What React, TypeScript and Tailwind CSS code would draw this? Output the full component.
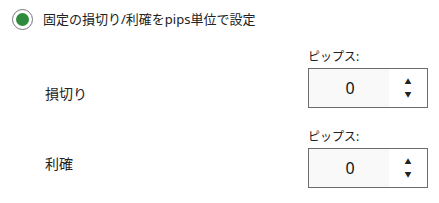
import React from 'react';

const font = { fontFamily: '"Noto Sans", "Noto Sans CJK JP", sans-serif' };

const PipsInput: React.FC<{ value: number }> = ({ value }) => (
  <div className="flex flex-col">
    <span className="text-[12px] leading-[16px] text-[#222]">ピップス:</span>
    <div className="mt-[3px] flex h-[40px] w-[120px] border border-[#6b6b6b] bg-[#f9f9f9]">
      <div className="flex flex-1 items-center justify-center pl-[2px] text-[16px] text-[#111]">{value}</div>
      <div className="flex w-[38px] flex-col items-center justify-center gap-[6px] bg-white text-[7px] leading-[7px] text-[#222]">
        <span>▲</span>
        <span>▼</span>
      </div>
    </div>
  </div>
);

export default function App() {
  const rows = [
    { label: '損切り', pad: 'pt-[35px]' },
    { label: '利確', pad: 'pt-[25px]' },
  ];
  return (
    <div className="h-[203px] w-[439px] bg-white text-[#222]" style={font}>
      <div className="flex items-center pl-[12px] pt-[9px]">
        <div className="flex h-[21px] w-[21px] items-center justify-center rounded-full border border-[#777] bg-white">
          <div className="h-[13px] w-[13px] rounded-full bg-[#2e8b3e]" />
        </div>
        <span className="ml-[10px] text-[13px] leading-[21px]">固定の損切り/利確をpips単位で設定</span>
      </div>
      <div className="mt-[19px] flex flex-col gap-[21px]">
        {rows.map((r) => (
          <div key={r.label} className="flex">
            <div className={`w-[308px] pl-[45px] text-[14px] leading-[20px] ${r.pad}`}>{r.label}</div>
            <PipsInput value={0} />
          </div>
        ))}
      </div>
    </div>
  );
}
